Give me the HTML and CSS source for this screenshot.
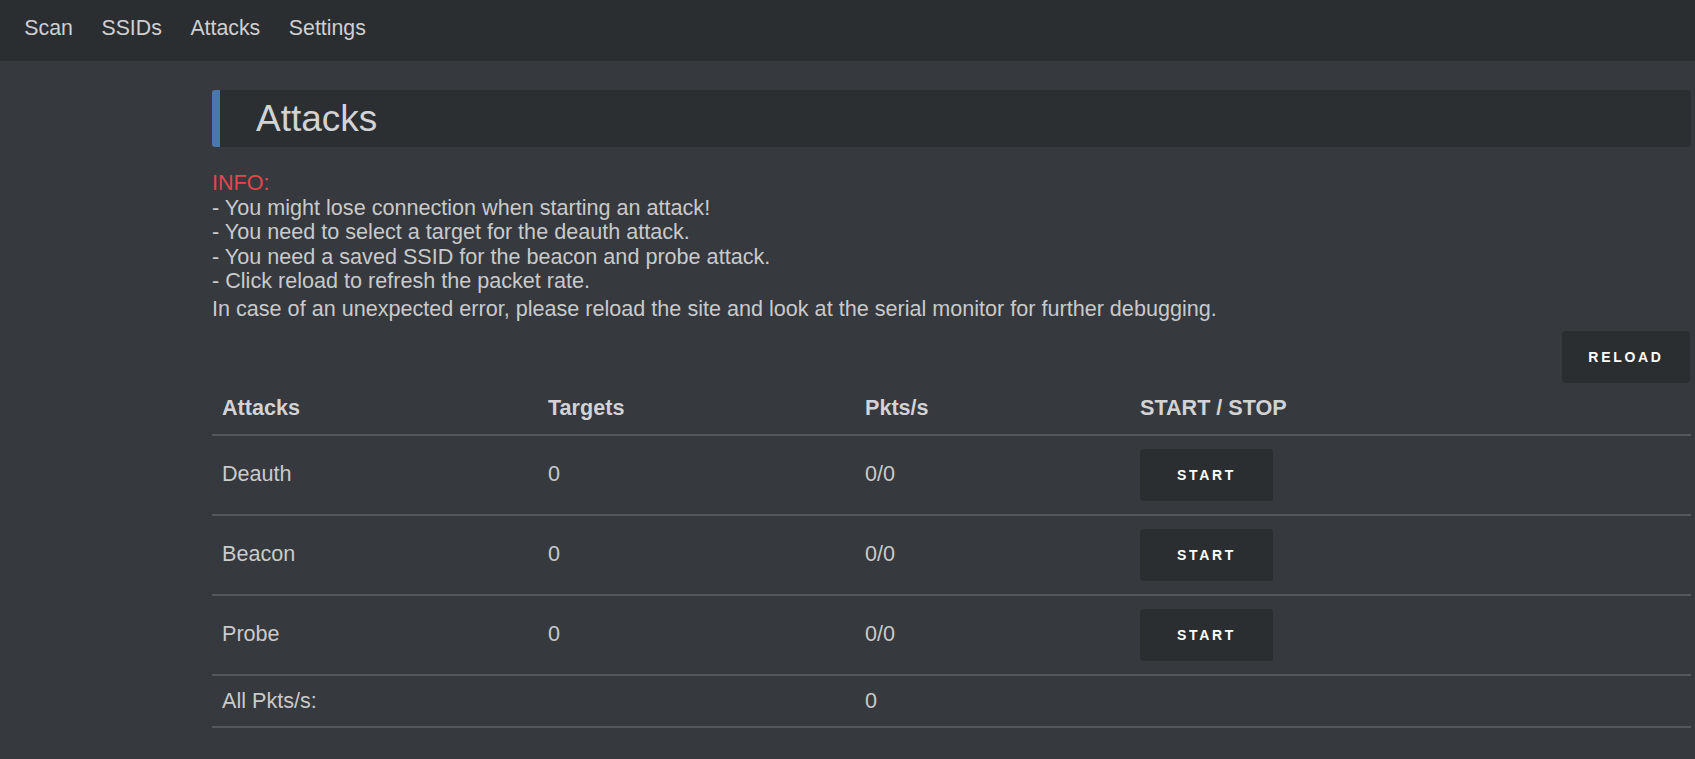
FILE: index.html
```html
<!DOCTYPE html>
<html lang="en">

<head>
    <meta charset="UTF-8">
    <meta name="viewport" content="width=device-width, initial-scale=1.0">
    <title>Attacks</title>
    <link rel="stylesheet" href="styles.css">
</head>

<body>
    <nav class="topnav">
        <a href="#">Scan</a>
        <a href="#">SSIDs</a>
        <a href="#">Attacks</a>
        <a href="#">Settings</a>
    </nav>

    <div class="main">
        <h1 class="header">Attacks</h1>

        <p class="info">
            <span class="red">INFO:</span><br>
            - You might lose connection when starting an attack!<br>
            - You need to select a target for the deauth attack.<br>
            - You need a saved SSID for the beacon and probe attack.<br>
            - Click reload to refresh the packet rate.<br>
            <span class="last">In case of an unexpected error, please reload the site and look at the serial monitor for further debugging.</span>
        </p>

        <div class="toolbar">
            <button class="btn reload">RELOAD</button>
        </div>

        <table class="attacks">
            <tr>
                <th class="c1">Attacks</th>
                <th class="c2">Targets</th>
                <th class="c3">Pkts/s</th>
                <th>START / STOP</th>
            </tr>
            <tr>
                <td>Deauth</td>
                <td>0</td>
                <td>0/0</td>
                <td><button class="btn start">START</button></td>
            </tr>
            <tr>
                <td>Beacon</td>
                <td>0</td>
                <td>0/0</td>
                <td><button class="btn start">START</button></td>
            </tr>
            <tr>
                <td>Probe</td>
                <td>0</td>
                <td>0/0</td>
                <td><button class="btn start">START</button></td>
            </tr>
            <tr>
                <td>All Pkts/s:</td>
                <td></td>
                <td>0</td>
                <td></td>
            </tr>
        </table>
    </div>
</body>

</html>
```

FILE: styles.css
```css
body,
h1,
p,
table {
    padding: 0;
    margin: 0;
}

body {
    background: #36393d;
    color: #c9cacb;
    font-family: "Liberation Sans", Arial, sans-serif;
    font-size: 21.6px;
    line-height: 24.5px;
}

.topnav {
    height: 61px;
    background: #2b2e31;
    display: flex;
    align-items: center;
    padding: 0 0 0 10px;
}

.topnav a {
    color: #cfd0d1;
    text-decoration: none;
    font-size: 21.3px;
    padding: 0 14.3px;
    margin-top: -4px;
}

.main {
    margin: 29px 4px 0 212px;
}

.header {
    height: 57px;
    background: #2c2f32;
    border-left: 8px solid #4a78ad;
    border-radius: 3px;
    font-size: 37px;
    font-weight: normal;
    color: #d2d3d4;
    line-height: 57px;
    padding-left: 36px;
}

.info {
    margin-top: 24px;
}

.info .red {
    color: #e3474c;
}

.info .last {
    display: inline-block;
    margin-top: 3px;
}

.toolbar {
    display: flex;
    justify-content: flex-end;
    margin-top: 10px;
}

.btn {
    background: #2b2e31;
    color: #fff;
    border: none;
    border-radius: 4px;
    height: 52px;
    font-family: "Liberation Sans", Arial, sans-serif;
    font-size: 14px;
    font-weight: bold;
    letter-spacing: 2.7px;
    cursor: pointer;
}

.reload {
    width: 128px;
    margin-right: 1px;
}

.start {
    width: 133px;
}

.attacks {
    width: 100%;
    border-collapse: collapse;
}

.attacks th,
.attacks td {
    text-align: left;
    padding: 13px 10px;
    border-bottom: 2px solid #55585b;
}

.attacks th {
    font-weight: bold;
    color: #d2d3d4;
}

.attacks th.c1 {
    width: 306px;
}

.attacks th.c2 {
    width: 297px;
}

.attacks th.c3 {
    width: 255px;
}
```
